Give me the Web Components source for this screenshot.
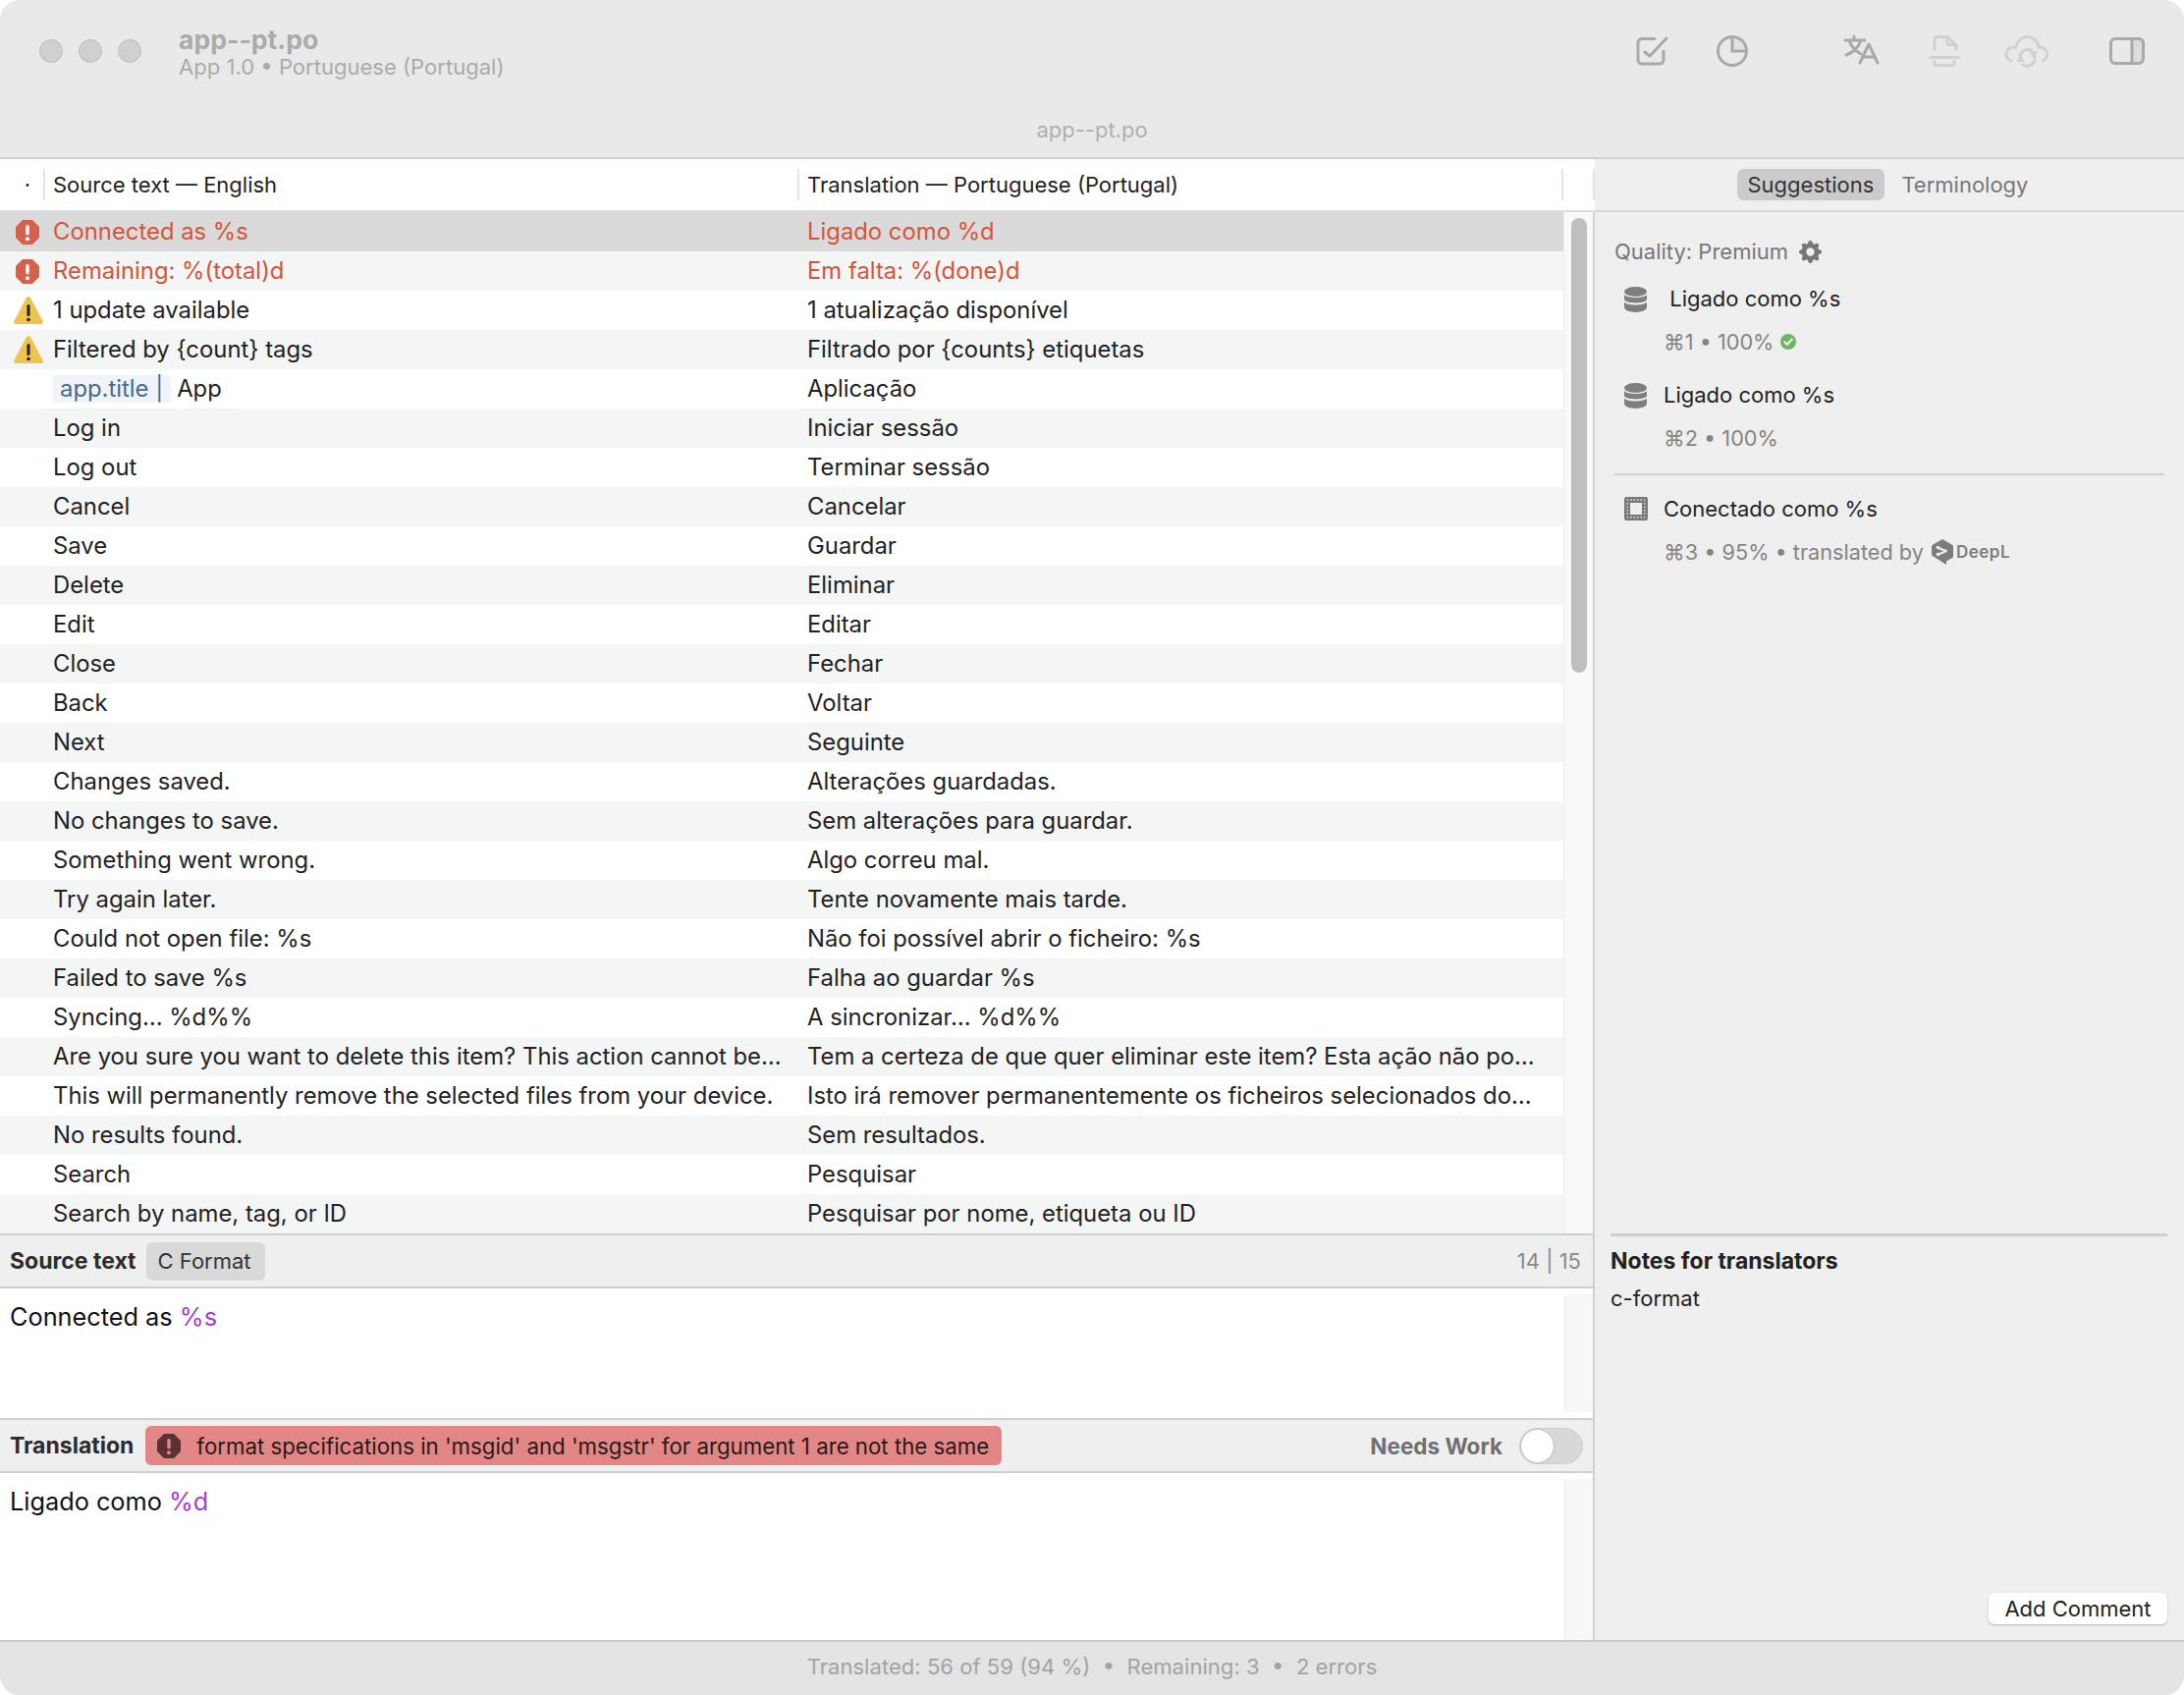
<!DOCTYPE html>
<html>
<head>
<meta charset="utf-8">
<title>app--pt.po</title>
<style>
  html, body { margin: 0; padding: 0; background: #fff; }
  body { font-family: Inter, "Noto Sans", sans-serif; font-size: 23.85px; color: #222; }
</style>
</head>
<body>
<app-window>
  <title-bar slot="top"></title-bar>
  <list-pane slot="list"></list-pane>
  <editor-pane slot="source" label="Source text" height="134" count="14 | 15">
    <format-tag slot="badge">C Format</format-tag>
    Connected as <span style="color:#a83ccb">%s</span>
  </editor-pane>
  <editor-pane slot="translation" label="Translation" height="170" toggle>
    <error-banner slot="badge">format specifications in 'msgid' and 'msgstr' for argument 1 are not the same</error-banner>
    Ligado como <span style="color:#a83ccb">%d</span>
  </editor-pane>
  <side-panel slot="side"></side-panel>
  <status-bar slot="bottom">Translated: 56 of 59 (94 %)&nbsp; •&nbsp; Remaining: 3&nbsp; •&nbsp; 2 errors</status-bar>
</app-window>

<script>
const GEAR = "M9.405 1.05c-.413-1.4-2.397-1.4-2.81 0l-.1.34a1.464 1.464 0 0 1-2.105.872l-.31-.17c-1.283-.698-2.686.705-1.987 1.987l.169.311c.446.82.023 1.841-.872 2.105l-.34.1c-1.4.413-1.4 2.397 0 2.81l.34.1a1.464 1.464 0 0 1 .872 2.105l-.17.31c-.698 1.283.705 2.686 1.987 1.987l.311-.169a1.464 1.464 0 0 1 2.105.872l.1.34c.413 1.4 2.397 1.4 2.81 0l.1-.34a1.464 1.464 0 0 1 2.105-.872l.31.17c1.283.698 2.686-.705 1.987-1.987l-.169-.311a1.464 1.464 0 0 1 .872-2.105l.34-.1c1.4-.413 1.4-2.397 0-2.81l-.34-.1a1.464 1.464 0 0 1-.872-2.105l.17-.31c.698-1.283-.705-2.686-1.987-1.987l-.311.169a1.464 1.464 0 0 1-2.105-.872l-.1-.34zM8 10.93a2.929 2.929 0 1 1 0-5.86 2.929 2.929 0 0 1 0 5.858z";

const ICONS = {
  check: [32, 30, `<g fill="none" stroke="#a9a9a9" stroke-width="3" stroke-linecap="round" stroke-linejoin="round"><path d="M19 2.500H6a4 4 0 0 0-4 4V24a4 4 0 0 0 4 4h18a4 4 0 0 0 4-4V15"/><path d="M9 16l5 4L31 2"/></g>`],
  pie: [32, 32, `<path d="M16 2a14 14 0 0 1 14 14H16z" fill="#e2e2e2"/><g fill="none" stroke="#a9a9a9" stroke-width="3"><circle cx="16" cy="16" r="14.500"/><path d="M16 2v14h14"/></g>`],
  translate: [37, 30, `<g fill="none" stroke="#a9a9a9" stroke-width="3" stroke-linecap="round" stroke-linejoin="round"><path d="M11 1v4M2 5h20M6 5c2 7 7 11 12 14M18 5C16 11 11 17 3 20"/><path d="M17 28l9-19 9 19M20.500 22h11"/></g>`],
  doc: [32, 32, `<g fill="none" stroke="#d1d1d1" stroke-width="3" stroke-linecap="round" stroke-linejoin="round"><path d="M6 14V4a2.500 2.500 0 0 1 2.500-2.500H19L28 10v4"/><path d="M19 2v6a1.500 1.500 0 0 0 1.500 1.500H28"/><path d="M1.500 22.500h29"/><path d="M6 26.500V29a1.500 1.500 0 0 0 1.500 1.500h17A1.500 1.500 0 0 0 26 29v-2.500"/></g>`],
  cloud: [44, 32, `<g fill="none" stroke="#d1d1d1" stroke-width="3" stroke-linecap="round" stroke-linejoin="round"><path d="M6 26C1 24 0 20 2 16c1.500-3 5-4.500 8.500-3.500C12 6 17 1.500 22 1.500c7 0 11.500 5 12 11 5-1 8.500 2.500 8.500 6.500 0 3-1.500 5.500-4 6.500"/><path d="M15 22a8 8 0 0 1 11-7M29 19a8 8 0 0 1-11 11"/></g><path d="M11 27l4.500-7 4.500 7zM24 16l9 0-4.500 7z" fill="#d1d1d1"/>`],
  sidebar: [36, 28, `<path d="M23 2h9a2 2 0 0 1 2 2v20a2 2 0 0 1-2 2h-9z" fill="#dcdcdc"/><rect x="1.500" y="1.500" width="33" height="25" rx="4.500" fill="none" stroke="#a9a9a9" stroke-width="3"/><path d="M23 2v24" stroke="#a9a9a9" stroke-width="3"/>`],
  error: [24, 25, `<path d="M7 0h10l7 7v11l-7 7H7l-7-7V7z" fill="var(--tint,#d4614b)"/><rect x="10.300" y="5" width="3.400" height="10.500" rx="1.700" fill="var(--mark,#fff)"/><circle cx="12" cy="19.300" r="2" fill="var(--mark,#fff)"/>`],
  warning: [30, 28, `<path d="M15 0c1 0 1.800.7 2.400 1.800l12 22.700c.9 1.800.2 3.500-2 3.500H2.600C.4 28-.3 26.300.6 24.500l12-22.700C13.200.7 14 0 15 0z" fill="#eec34f"/><rect x="13.500" y="8" width="3" height="12" rx="1.500" fill="#222"/><circle cx="15" cy="23.500" r="1.800" fill="#222"/>`],
  db: [23, 26, `<g fill="#7f7f7f"><ellipse cx="11.500" cy="5" rx="11.500" ry="5"/><path d="M0 8c2 4 21 4 23 0v5c-1 4.500-22 4.500-23 0z"/><path d="M0 15.500c2 4 21 4 23 0V21c-1 6.500-22 6.500-23 0z"/></g>`],
  mt: [24, 24, `<rect width="24" height="24" rx="2" fill="#7a7a7a"/><rect x="6" y="6" width="12" height="12" fill="#efefef"/><path d="M2.800 3.200h18.400M2.800 20.800h18.400M3.200 6v12M20.800 6v12" stroke="#efefef" stroke-width="1.200" stroke-dasharray="1.600 1.800" fill="none"/>`],
  ok: [16, 16, `<circle cx="8" cy="8" r="8" fill="#6cb761"/><path d="M4.300 8.300l2.600 2.500 4.800-5.300" fill="none" stroke="#fff" stroke-width="2" stroke-linecap="round" stroke-linejoin="round"/>`],
  gear: [16, 16, `<path d="${GEAR}" fill="#767676"/>`],
  deepl: [22, 26, `<path d="M11 0l9.500 5.500c1 .6 1.500 1.400 1.500 2.500v9c0 1.100-.5 1.900-1.500 2.500L15 22.500V26l-4-2.500-9.500-6C.5 16.900 0 16.100 0 15V8c0-1.100.5-1.900 1.500-2.500z" fill="#7d7d7d"/><path d="M7 9l6 2.500M7 15.500l6-2.500" stroke="#efefef" stroke-width="2" fill="none"/><circle cx="6.500" cy="8.500" r="1.800" fill="#efefef"/><circle cx="6.500" cy="15.500" r="1.800" fill="#efefef"/><circle cx="14" cy="12" r="1.800" fill="#efefef"/>`],
};

class AppIcon extends HTMLElement {
  constructor() {
    super();
    const [w, h, body] = ICONS[this.getAttribute('name')];
    const width = this.getAttribute('width') || w;
    const height = this.getAttribute('height') || h;
    this.attachShadow({mode: 'open'}).innerHTML = `
      <style>:host { display: inline-block; line-height: 0; flex: none; } svg { display: block; overflow: visible; }</style>
      <svg width="${width}" height="${height}" viewBox="0 0 ${w} ${h}">${body}</svg>
    `;
  }
}

class AppWindow extends HTMLElement {
  constructor() {
    super();
    this.attachShadow({mode: 'open'}).innerHTML = `
      <style>
        :host { display: grid; grid-template-rows: 160px 1510px 56px; width: 2224px; height: 1726px; border-radius: 20px; overflow: hidden; }
        .main { display: grid; grid-template-columns: 1624px 600px; min-height: 0; }
        .left { display: flex; flex-direction: column; min-height: 0; }
      </style>
      <slot name="top"></slot>
      <div class="main">
        <div class="left">
          <slot name="list"></slot>
          <slot name="source"></slot>
          <slot name="translation"></slot>
        </div>
        <slot name="side"></slot>
      </div>
      <slot name="bottom"></slot>
    `;
  }
}

class TitleBar extends HTMLElement {
  constructor() {
    super();
    this.attachShadow({mode: 'open'}).innerHTML = `
      <style>
        :host { display: flex; flex-direction: column; background: #e9e9e9; }
        .top { display: flex; align-items: flex-start; height: 104px; padding: 26px 40px 0 40px; box-sizing: border-box; }
        .lights { display: flex; gap: 16px; margin-top: 14px; }
        .lights i { width: 24px; height: 24px; box-sizing: border-box; border-radius: 50%; background: #d0d0d0; border: 1px solid #bcbcbc; }
        .names { margin-left: 38px; }
        .name { font-size: 26.6px; font-weight: 700; line-height: 28px; color: #ababab; }
        .sub { font-size: 22.05px; line-height: 28px; color: #ababab; }
        .tools { margin-left: auto; display: flex; align-items: flex-start; margin-top: 10px; }
        .center { text-align: center; font-size: 22px; line-height: 56px; color: #b0b0b0; height: 56px; }
      </style>
      <div class="top">
        <div class="lights"><i></i><i></i><i></i></div>
        <div class="names">
          <div class="name">app--pt.po</div>
          <div class="sub">App 1.0 • Portuguese (Portugal)</div>
        </div>
        <div class="tools">
          <app-icon name="check" style="margin-top:1px"></app-icon>
          <app-icon name="pie" style="margin-left:50px"></app-icon>
          <app-icon name="translate" style="margin-left:97px"></app-icon>
          <app-icon name="doc" style="margin-left:50px"></app-icon>
          <app-icon name="cloud" style="margin-left:46px"></app-icon>
          <app-icon name="sidebar" style="margin-left:62px;margin-top:2px"></app-icon>
        </div>
      </div>
      <div class="center">app--pt.po</div>
    `;
  }
}

const ROWS = [
  ['Connected as %s', 'Ligado como %d', 'error', true],
  ['Remaining: %(total)d', 'Em falta: %(done)d', 'error'],
  ['1 update available', '1 atualização disponível', 'warning'],
  ['Filtered by {count} tags', 'Filtrado por {counts} etiquetas', 'warning'],
  ['App', 'Aplicação', '', false, 'app.title'],
  ['Log in', 'Iniciar sessão'],
  ['Log out', 'Terminar sessão'],
  ['Cancel', 'Cancelar'],
  ['Save', 'Guardar'],
  ['Delete', 'Eliminar'],
  ['Edit', 'Editar'],
  ['Close', 'Fechar'],
  ['Back', 'Voltar'],
  ['Next', 'Seguinte'],
  ['Changes saved.', 'Alterações guardadas.'],
  ['No changes to save.', 'Sem alterações para guardar.'],
  ['Something went wrong.', 'Algo correu mal.'],
  ['Try again later.', 'Tente novamente mais tarde.'],
  ['Could not open file: %s', 'Não foi possível abrir o ficheiro: %s'],
  ['Failed to save %s', 'Falha ao guardar %s'],
  ['Syncing… %d%%', 'A sincronizar… %d%%'],
  ['Are you sure you want to delete this item? This action cannot be…', 'Tem a certeza de que quer eliminar este item? Esta ação não po…'],
  ['This will permanently remove the selected files from your device.', 'Isto irá remover permanentemente os ficheiros selecionados do…'],
  ['No results found.', 'Sem resultados.'],
  ['Search', 'Pesquisar'],
  ['Search by name, tag, or ID', 'Pesquisar por nome, etiqueta ou ID'],
];

class StringRow extends HTMLElement {
  constructor() {
    super();
    const status = this.getAttribute('status');
    const key = this.getAttribute('key');
    const icon = status ? `<app-icon name="${status}"></app-icon>` : '';
    const chip = key ? `<span class="chip">${key} |</span>` : '';
    this.attachShadow({mode: 'open'}).innerHTML = `
      <style>
        :host { display: grid; grid-template-columns: 54px 768px 1fr; height: 40px; line-height: 40px; background: #fff; color: #222; white-space: nowrap; }
        :host([alt]) { background: #f4f5f5; }
        :host([selected]) { background: #dadada; }
        :host([status="error"]) { color: #d6533a; }
        .st { display: flex; align-items: center; justify-content: center; padding-left: 4px; }
        app-icon[name=error] { margin-left: -2px; }
        .chip { display: inline-block; line-height: 28px; padding: 0 8px 0 7px; margin-right: 6px; background: #f0f4f8; color: #476a8f; }
        .cell { overflow: hidden; }
      </style>
      <div class="st">${icon}</div>
      <div class="cell">${chip}<slot name="source"></slot></div>
      <div class="cell"><slot name="target"></slot></div>
    `;
  }
}

class ListPane extends HTMLElement {
  constructor() {
    super();
    const rows = ROWS.map(([source, target, status, selected, key], i) => `
      <string-row ${status ? `status="${status}"` : ''} ${selected ? 'selected' : ''} ${i % 2 ? 'alt' : ''} ${key ? `key="${key}"` : ''}>
        <span slot="source">${source}</span>
        <span slot="target">${target}</span>
      </string-row>`).join('');
    this.attachShadow({mode: 'open'}).innerHTML = `
      <style>
        :host { display: block; height: 1098px; box-sizing: border-box; border-bottom: 2px solid #cfcfcf; }
        .head { display: grid; grid-template-columns: 46px 768px 778px 32px; height: 56px; box-sizing: border-box; border-top: 2px solid #d2d2d2; border-bottom: 2px solid #dcdcdc; background: #fff; font-size: 22px; line-height: 52px; }
        .head div { padding-left: 8px; position: relative; }
        .head div::after { content: ""; position: absolute; right: 0; top: 10px; height: 32px; width: 2px; background: #e4e4e4; }
        .head .dot { padding: 0 0 0 10px; text-align: center; }
        .body { display: grid; grid-template-columns: 1592px 32px; height: 1040px; }
        .gutter { background: #f9f9f9; border-left: 1px solid #ececec; border-right: 2px solid #d0d0d0; padding: 6px 0 0 7px; }
        .thumb { width: 16px; height: 463px; border-radius: 8px; background: #bfbfbf; }
      </style>
      <div class="head">
        <div class="dot">·</div>
        <div>Source text — English</div>
        <div>Translation — Portuguese (Portugal)</div>
        <div></div>
      </div>
      <div class="body">
        <div class="rows">${rows}</div>
        <div class="gutter"><div class="thumb"></div></div>
      </div>
    `;
  }
}

class EditorPane extends HTMLElement {
  constructor() {
    super();
    const count = this.getAttribute('count');
    const right = this.hasAttribute('toggle')
      ? `<span class="needs">Needs Work</span><span class="switch"><i></i></span>`
      : `<span class="count">${count}</span>`;
    this.attachShadow({mode: 'open'}).innerHTML = `
      <style>
        :host { display: block; }
        .bar { display: flex; align-items: center; height: 54px; padding: 0 10px; box-sizing: border-box; background: #efefef; border-bottom: 2px solid #cfcfcf; border-right: 2px solid #d0d0d0; }
        .label { font-weight: 700; font-size: 23px; color: #2c2c2c; margin-right: 12px; }
        .right { margin-left: auto; display: flex; align-items: center; }
        .count { color: #8a8a8a; font-size: 22px; margin-right: 2px; }
        .needs { font-weight: 700; font-size: 22.5px; color: #707070; margin-right: 17px; }
        .switch { display: block; width: 65px; height: 37px; box-sizing: border-box; border-radius: 19px; background: #d8d8d8; border: 1px solid #d0d0d0; }
        .switch i { display: block; width: 33px; height: 33px; margin: 1px; border-radius: 50%; background: #fff; box-shadow: 0 0 2px rgba(0,0,0,.3); }
        .text { display: grid; grid-template-columns: 1fr 29px; background: #fff; box-sizing: border-box; border-right: 2px solid #d0d0d0; border-bottom: 2px solid #cfcfcf; }
        :host([toggle]) .text { border-bottom: 0; }
        .content { padding: 10.5px 10px 0; font-size: 25.3px; line-height: 36px; color: #111; }
        .scroll { background: #f8f8f8; margin: 6px 0; border-left: 1px solid #ececec; }
        :host([toggle]) .scroll { margin-bottom: 0; }
      </style>
      <div class="bar">
        <span class="label">${this.getAttribute('label')}</span>
        <slot name="badge"></slot>
        <span class="right">${right}</span>
      </div>
      <div class="text" style="height:${this.getAttribute('height')}px">
        <div class="content"><slot></slot></div>
        <div class="scroll"></div>
      </div>
    `;
  }
}

class FormatTag extends HTMLElement {
  constructor() {
    super();
    this.attachShadow({mode: 'open'}).innerHTML = `
      <style>
        :host { display: block; height: 39px; line-height: 39px; margin-left: -2px; padding: 0 14px 0 12px; border-radius: 6px; background: #d9d9d9; color: #333; font-size: 22px; white-space: nowrap; }
      </style>
      <slot></slot>
    `;
  }
}

class ErrorBanner extends HTMLElement {
  constructor() {
    super();
    this.attachShadow({mode: 'open'}).innerHTML = `
      <style>
        :host { display: flex; align-items: center; height: 40px; width: 872px; box-sizing: border-box; padding-left: 12px; border-radius: 6px; background: #e28785; color: #2a1818; font-size: 22.25px; white-space: nowrap; }
        app-icon { margin-right: 16px; --tint: #5b3133; --mark: #e28785; }
      </style>
      <app-icon name="error"></app-icon><slot></slot>
    `;
  }
}

class SuggestionItem extends HTMLElement {
  constructor() {
    super();
    this.attachShadow({mode: 'open'}).innerHTML = `
      <style>
        :host { display: grid; grid-template-columns: 50px 1fr; line-height: 44px; font-size: 22px; color: #222; }
        .ic { display: flex; justify-content: center; padding: 10px 7px 0 0; height: 34px; }
        .meta { display: flex; align-items: center; color: #848484; height: 44px; white-space: nowrap; font-size: 21.7px; }
      </style>
      <div class="ic"><app-icon name="${this.getAttribute('icon')}"></app-icon></div>
      <div><slot></slot></div>
      <div></div>
      <div class="meta"><slot name="meta"></slot></div>
    `;
  }
}

class SidePanel extends HTMLElement {
  constructor() {
    super();
    this.attachShadow({mode: 'open'}).innerHTML = `
      <style>
        :host { display: flex; flex-direction: column; background: #efefef; min-height: 0; font-size: 22px; }
        .tabs { display: flex; justify-content: center; align-items: center; gap: 17px; height: 56px; box-sizing: border-box; border-top: 2px solid #d2d2d2; border-bottom: 2px solid #d6d6d6; color: #777; padding-right: 14px; }
        .on { background: #cbcbcb; color: #333; border-radius: 7px; line-height: 32px; padding: 0 11px; }
        .top { flex: 1; padding: 23px 20px 0 20px; }
        .quality { display: flex; align-items: center; gap: 11px; color: #777; line-height: 34px; margin-bottom: 9px; }
        suggestion-item { margin-bottom: 10px; }
        span[slot=meta] { display: flex; align-items: center; }
        hr { border: 0; border-top: 2px solid #d0d0d0; margin: 14px 0 12px; }
        .deepl { display: inline-flex; align-items: center; margin-left: 8px; gap: 3px; font-weight: 600; font-size: 17px; color: #7d7d7d; letter-spacing: .5px; }
        .meta-ok { margin-left: 7px; }
        .notes { height: 414px; margin: 0 17px 0 16px; border-top: 3px solid #cfcfcf; box-sizing: border-box; display: flex; flex-direction: column; color: #222; }
        .notes h4 { margin: 8px 0 0; font-size: 23px; line-height: 34px; color: #222; }
        .notes p { margin: 4px 0 0; line-height: 34px; }
        .add { margin: auto 0 16px auto; height: 32px; line-height: 32px; width: 182px; text-align: center; background: #fff; border-radius: 6px; box-shadow: 0 1px 2px rgba(0,0,0,.25); }
      </style>
      <div class="tabs"><span class="on">Suggestions</span><span>Terminology</span></div>
      <div class="top">
        <div class="quality">Quality: Premium <app-icon name="gear" width="23" height="23"></app-icon></div>
        <suggestion-item icon="db">
          &nbsp;Ligado como %s
          <span slot="meta">⌘1 • 100%<app-icon class="meta-ok" name="ok"></app-icon></span>
        </suggestion-item>
        <suggestion-item icon="db">
          Ligado como %s
          <span slot="meta">⌘2 • 100%</span>
        </suggestion-item>
        <hr>
        <suggestion-item icon="mt">
          Conectado como %s
          <span slot="meta">⌘3 • 95% • translated by <span class="deepl"><app-icon name="deepl"></app-icon>DeepL</span></span>
        </suggestion-item>
      </div>
      <div class="notes">
        <h4>Notes for translators</h4>
        <p>c-format</p>
        <div class="add">Add Comment</div>
      </div>
    `;
  }
}

class StatusBar extends HTMLElement {
  constructor() {
    super();
    this.attachShadow({mode: 'open'}).innerHTML = `
      <style>
        :host { display: block; background: #e4e4e4; border-top: 2px solid #cbcbcb; box-sizing: border-box; text-align: center; color: #a3a3a3; font-size: 22.1px; line-height: 51px; white-space: nowrap; }
      </style>
      <slot></slot>
    `;
  }
}

window.customElements.define('app-icon', AppIcon);
window.customElements.define('title-bar', TitleBar);
window.customElements.define('string-row', StringRow);
window.customElements.define('list-pane', ListPane);
window.customElements.define('format-tag', FormatTag);
window.customElements.define('error-banner', ErrorBanner);
window.customElements.define('editor-pane', EditorPane);
window.customElements.define('suggestion-item', SuggestionItem);
window.customElements.define('side-panel', SidePanel);
window.customElements.define('status-bar', StatusBar);
window.customElements.define('app-window', AppWindow);
</script>
</body>
</html>
